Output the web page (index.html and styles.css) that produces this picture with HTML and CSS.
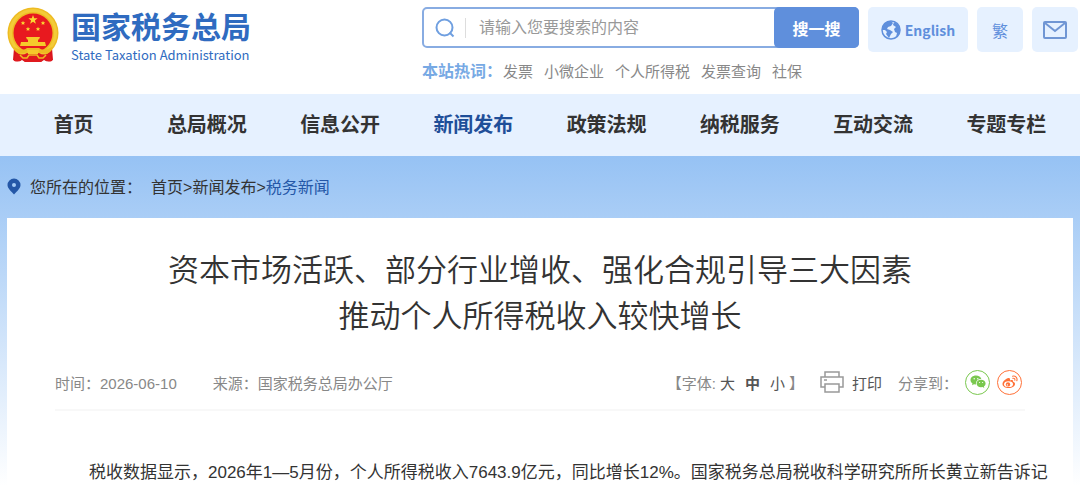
FILE: index.html
```
<!DOCTYPE html>
<html lang="zh-CN">
<head>
    <meta charset="UTF-8">
    <title>国家税务总局</title>
    <link rel="stylesheet" href="styles.css">
</head>
<body>
    <header class="header">
        <a class="logo" href="#">
            <svg class="emblem" viewBox="0 0 52 56" aria-hidden="true">
                <path d="M7 41 L6 53 Q11 56 15 53 L18 55 H34 L37 53 Q42 56 46 53 L45 41 Z" fill="#d9141c"/>
                <circle cx="26" cy="26" r="25.5" fill="#eebb22"/>
                <circle cx="26" cy="26" r="22.500" fill="none" stroke="#f3cb38" stroke-width="3"/>
                <circle cx="26" cy="26" r="19.5" fill="#e8191f"/>
                <path d="M26 8 L27.2 11.2 L30.6 11.3 L27.9 13.4 L28.9 16.7 L26 14.8 L23.1 16.7 L24.1 13.4 L21.4 11.3 L24.8 11.2 Z" fill="#fbd832"/>
                <g fill="#fbd832">
                    <path id="star" d="M16 13.8 L16.6 15.3 L18.2 15.4 L17 16.4 L17.4 18 L16 17.1 L14.6 18 L15 16.4 L13.8 15.4 L15.4 15.3 Z"/>
                    <use href="#star" x="20"/>
                    <use href="#star" x="5" y="6"/>
                    <use href="#star" x="15" y="6"/>
                </g>
                <path d="M19 30 H33 L32 32.500 H31 V35 H38 L39 39 H13 L14 35 H21 V32.500 H20 Z" fill="#f6c92b"/>
                <path d="M7 40 Q16 45 20 41 H32 Q36 45 45 40 L43 45 Q36 48 32 45 H20 Q16 48 9 45 Z" fill="#eebb22"/>
                <path d="M9 46 Q15 49 20 46 H32 Q37 49 43 46 L45 54 Q40 55 36 52 L34 55 H18 L16 52 Q12 55 7 54 Z" fill="#e01a1f"/>
                <path d="M20 43 H32 L31 47 H21 Z" fill="#f6c92b"/>
                <path d="M13 48 L16 51 H20 L22 48 H30 L32 51 H36 L39 48" fill="none" stroke="#eebb22" stroke-width="1.500"/>
            </svg>
            <span class="logo-text">
                <span class="logo-cn">国家税务总局</span>
                <span class="logo-en">State Taxation Administration</span>
            </span>
        </a>

        <div class="tools">
            <div class="search">
                <form class="search-box">
                    <svg class="search-icon" viewBox="0 0 20 20" aria-hidden="true">
                        <circle cx="9.500" cy="9.500" r="8"/>
                        <path d="M14.500 14.500 L18.500 18.500"/>
                    </svg>
                    <input class="search-input" type="text" aria-label="搜索" placeholder="请输入您要搜索的内容">
                    <button class="search-btn" type="button">搜一搜</button>
                </form>
                <div class="hot">
                    <strong>本站热词：</strong>
                    <a href="#">发票</a>
                    <a href="#">小微企业</a>
                    <a href="#">个人所得税</a>
                    <a href="#">发票查询</a>
                    <a href="#">社保</a>
                </div>
            </div>
            <a class="tool tool-en" href="#">
                <svg class="globe" viewBox="0 0 20 20" aria-hidden="true">
                    <circle cx="10" cy="10" r="9" fill="#e6f1ff" stroke="#5f8fdc" stroke-width="1.500"/>
                    <path d="M10 1 Q4 1 2 6 L1 10 L4 10 L6 12 L5 14 L8 18 L10 14 L12 12 L9 10 L6 9 L7 7 L10 6 L12 3 Z M13 2 L12 5 L15 7 L13 9 L14 12 L16 13 L15 17 Q19 14 19 10 Q18 4 13 2 Z" fill="#5f8fdc"/>
                </svg>
                <span>English</span>
            </a>
            <a class="tool tool-sq" href="#">繁</a>
            <a class="tool tool-sq" href="#" aria-label="邮箱">
                <svg class="mail" viewBox="0 0 24 18" aria-hidden="true">
                    <rect x="1" y="1" width="22" height="16" rx="1"/>
                    <path d="M2 2 L12 10 L22 2"/>
                </svg>
            </a>
        </div>
    </header>

    <nav class="nav">
        <a href="#">首页</a>
        <a href="#">总局概况</a>
        <a href="#">信息公开</a>
        <a class="active" href="#">新闻发布</a>
        <a href="#">政策法规</a>
        <a href="#">纳税服务</a>
        <a href="#">互动交流</a>
        <a href="#">专题专栏</a>
    </nav>

    <main class="main">
        <div class="crumbs">
            <svg class="pin" viewBox="0 0 14 17" aria-hidden="true">
                <path d="M7 0.500 A6.500 6.500 0 0 0 0.500 7 C0.500 10.500 4 13 7 16.500 C10 13 13.500 10.500 13.500 7 A6.500 6.500 0 0 0 7 0.500 Z" fill="#2457a7"/>
                <circle cx="7" cy="7" r="2" fill="#a5cbf6"/>
            </svg>
            <span>您所在的位置：</span>
            <span><a href="#">首页</a>&gt;<a href="#">新闻发布</a>&gt;<a class="current" href="#">税务新闻</a></span>
        </div>

        <article class="article">
            <h1>资本市场活跃、部分行业增收、强化合规引导三大因素<br>推动个人所得税收入较快增长</h1>

            <div class="meta">
                <div class="meta-info">
                    <span>时间：2026-06-10</span>
                    <span>来源：国家税务总局办公厅</span>
                </div>
                <div class="meta-tools">
                    <div class="sizes">
                        <span>【字体:</span>
                        <button type="button">大</button>
                        <button class="on" type="button">中</button>
                        <button type="button">小</button>
                        <span>】</span>
                    </div>
                    <button class="print" type="button">
                        <svg class="printer" viewBox="0 0 24 22" aria-hidden="true">
                            <path d="M5 6 V1 H19 V6 M5 16 H1 V6 H23 V16 H19 M5 13 H19 V21 H5 Z M4 9 H7"/>
                        </svg>
                        打印
                    </button>
                    <div class="share">
                        <span>分享到：</span>
                        <a class="wechat" href="#" aria-label="微信">
                            <svg viewBox="0 0 16 14" aria-hidden="true">
                                <path d="M6 0.500 C2.500 0.500 0.500 2.700 0.500 5 C0.500 6.500 1.200 7.700 2.500 8.500 L2 10.200 L4 9.200 L6 9.500 C5.500 6 8 4 11.300 4 C10.800 1.800 8.700 0.500 6 0.500 Z"/>
                                <path d="M11 4.800 C8.300 4.800 6.600 6.500 6.600 8.500 C6.600 10.700 8.500 12.200 11 12.200 L12.600 12 L14.300 13 L13.900 11.400 C15 10.700 15.600 9.700 15.600 8.500 C15.600 6.400 13.600 4.800 11 4.800 Z"/>
                                <g fill="#fff">
                                    <circle cx="4.200" cy="3.800" r="0.700"/>
                                    <circle cx="7.800" cy="3.800" r="0.700"/>
                                    <circle cx="9.600" cy="7.500" r="0.600"/>
                                    <circle cx="12.600" cy="7.500" r="0.600"/>
                                </g>
                            </svg>
                        </a>
                        <a class="weibo" href="#" aria-label="微博">
                            <svg viewBox="0 0 16 14" aria-hidden="true">
                                <path d="M6.500 3 C4 3.400 0.500 6.500 0.500 9 C0.500 11.500 3.500 13 6.500 13 C10.500 13 13 10.800 13 8.900 C13 7.600 12 7 11 6.800 C11.500 5.500 10.800 4.500 8 5.500 C8.300 4 8 2.800 6.500 3 Z"/>
                                <ellipse cx="6.500" cy="9.200" rx="4.500" ry="2.900" fill="#fff"/>
                                <circle cx="6" cy="9.400" r="2.200"/>
                                <circle cx="5.400" cy="9.900" r="0.700" fill="#fff"/>
                                <path d="M10.500 1.200 C13.500 0.500 15.800 3 14.800 5.800 M10.800 3.300 C12.300 3 13.200 4 12.800 5.300" fill="none" stroke="#ff7138" stroke-width="1.100" stroke-linecap="round"/>
                            </svg>
                        </a>
                    </div>
                </div>
            </div>

            <p class="text">税收数据显示，2026年1—5月份，个人所得税收入7643.9亿元，同比增长12%。国家税务总局税收科学研究所所长黄立新告诉记</p>
        </article>
    </main>
</body>
</html>
```
FILE: styles.css
```
* { box-sizing: border-box; }
body { margin: 0; font-family: "Liberation Sans", "Noto Sans CJK SC", sans-serif; font-size: 16px; color: #333; background-color: #fff; }
a { color: inherit; text-decoration: none; }
button { padding: 0; border: none; background: none; font: inherit; color: inherit; cursor: pointer; }
svg { display: block; }

/* header */
.header { display: flex; justify-content: space-between; align-items: flex-start; padding: 7px 2px 11px 7px; }
.logo { display: flex; gap: 12px; color: #2f6bc0; }
.emblem { width: 52px; height: 56px; }
.logo-text { display: flex; flex-direction: column; gap: 4px; font-family: "Noto Sans CJK SC", sans-serif; white-space: nowrap; }
.logo-cn { font-size: 30px; line-height: 36px; font-weight: bold; }
.logo-en { font-size: 13px; line-height: 16px; }

.tools { display: flex; align-items: flex-start; gap: 9px; }
.search { width: 437px; }
.search-box { display: flex; align-items: center; height: 41px; border: 2px solid #88ace2; border-radius: 5px; }
.search-icon { width: 20px; height: 20px; margin: 0 10px 0 11px; fill: none; stroke: #6f9fe0; stroke-width: 2; }
.search-input { flex: 1; min-width: 0; height: 20px; padding: 0 0 0 13px; border: none; border-left: 1px solid #ddd; outline: none; font: inherit; background: none; }
.search-input::placeholder { color: #999; }
.search-btn { width: 85px; height: 41px; margin-right: -2px; border-radius: 5px; background-color: #5f8fdc; color: #fff; font-weight: bold; }
.hot { display: flex; gap: 11px; padding-top: 12px; font-size: 15px; line-height: 23px; color: #888; white-space: nowrap; }
.hot strong { margin-right: -10px; font-size: 16px; color: #77a9e4; }
.tool { display: flex; align-items: center; justify-content: center; height: 45px; border-radius: 5px; background-color: #e6f1ff; color: #5f8fdc; }
.tool-en { gap: 4px; width: 100px; font-family: "Noto Sans CJK SC", sans-serif; font-size: 14px; font-weight: bold; }
.tool-sq { width: 46px; }
.globe { width: 20px; height: 20px; }
.mail { width: 24px; height: 18px; fill: none; stroke: #7096d4; stroke-width: 2; }

/* nav */
.nav { display: flex; padding: 0 7px; background-color: #e6f1ff; font-size: 20px; line-height: 62px; font-weight: bold; }
.nav a { flex: 1; text-align: center; }
.nav .active { color: #1f4f99; }

/* content */
.main { padding: 0 7px; background: linear-gradient(#96c2f4, #fff 330px); }
.crumbs { display: flex; align-items: center; gap: 9px; height: 62px; padding-bottom: 2px; }
.crumbs .current { color: #2457a7; }
.pin { width: 14px; height: 17px; }
.article { padding: 30px 48px 0; background-color: #fff; }
h1 { margin: 0; font-size: 31px; line-height: 46px; font-weight: 350; text-align: center; }
.meta { display: flex; justify-content: space-between; align-items: center; height: 54px; margin-top: 17px; padding-bottom: 2px; border-bottom: 2px solid #f8f8f8; font-size: 15px; color: #888; }
.meta-info { display: flex; gap: 36px; }
.meta-tools { display: flex; align-items: center; gap: 16px; padding-right: 3px; }
.sizes { display: flex; gap: 10px; }
.sizes span:first-child { margin-right: -6px; }
.sizes span:last-child { margin-left: -6px; }
.sizes button, .print { color: #555; }
.sizes .on { font-weight: bold; }
.print { display: flex; align-items: center; gap: 8px; }
.printer { width: 24px; height: 22px; fill: none; stroke: #999; stroke-width: 1.5; }
.share { display: flex; align-items: center; gap: 7px; }
.wechat, .weibo { display: flex; align-items: center; justify-content: center; width: 25px; height: 25px; border: 1px solid; border-radius: 50%; }
.wechat { color: #7ac84f; }
.weibo { color: #ff7138; }
.share svg { width: 16px; height: 14px; fill: currentColor; }
.text { margin: 0; padding: 45px 0 0; font-size: 17px; line-height: 34px; text-indent: 2em; white-space: nowrap; }
```
